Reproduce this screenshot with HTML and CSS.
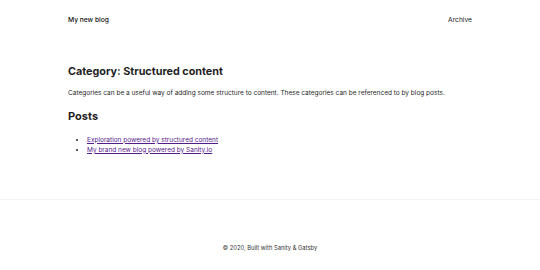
FILE: index.html
```html
<!DOCTYPE html>
<html>
<head>
    <title>My new blog</title>
    <link rel="stylesheet" href="styles.css">
</head>
<body>
    <header class="site-header">
        <div class="wrapper header-row">
            <a class="brand" href="#">My new blog</a>
            <nav class="nav">
                <a href="#">Archive</a>
            </nav>
        </div>
    </header>

    <main class="wrapper content">
        <h1 class="title">Category: Structured content</h1>
        <p class="description">Categories can be a useful way of adding some structure to content. These categories can be referenced to by blog posts.</p>
        <h2 class="subtitle">Posts</h2>
        <ul class="post-list">
            <li><a href="#">Exploration powered by structured content</a></li>
            <li><a href="#">My brand new blog powered by Sanity.io</a></li>
        </ul>
    </main>

    <footer class="site-footer">
        <div class="wrapper footer-row">
            © 2020, Built with Sanity &amp; Gatsby
        </div>
    </footer>
</body>
</html>
```

FILE: styles.css
```css
body {
    font-family: Inter, "Noto Sans", sans-serif;
    color: #1f1f1f;
    background-color: #fff;
    margin: 0;
    padding: 0;
}

.wrapper {
    max-width: 404px;
    margin: 0 auto;
    padding: 0 68px;
}

.header-row {
    display: flex;
    justify-content: space-between;
    align-items: center;
    height: 40px;
    font-size: 6.7px;
}

.brand {
    color: #111;
    text-decoration: none;
    font-weight: 500;
}

.nav a {
    color: #222;
    text-decoration: none;
}

.content {
    padding-top: 25px;
    padding-bottom: 44px;
    font-size: 6.5px;
}

.title {
    font-size: 10.8px;
    font-weight: 700;
    margin: 0 0 11px;
}

.description {
    margin: 0 0 10px;
    line-height: 1.5;
}

.subtitle {
    font-size: 11px;
    font-weight: 700;
    margin: 0 0 12px;
}

.post-list {
    margin: 0;
    padding-left: 19px;
    line-height: 10px;
}

.post-list a {
    color: #551a8b;
}

.site-footer {
    border-top: 1px solid #f4f4f4;
    background-color: #fff;
}

.footer-row {
    text-align: center;
    font-size: 5.8px;
    color: #333;
    padding-top: 44px;
    padding-bottom: 18px;
}
```
